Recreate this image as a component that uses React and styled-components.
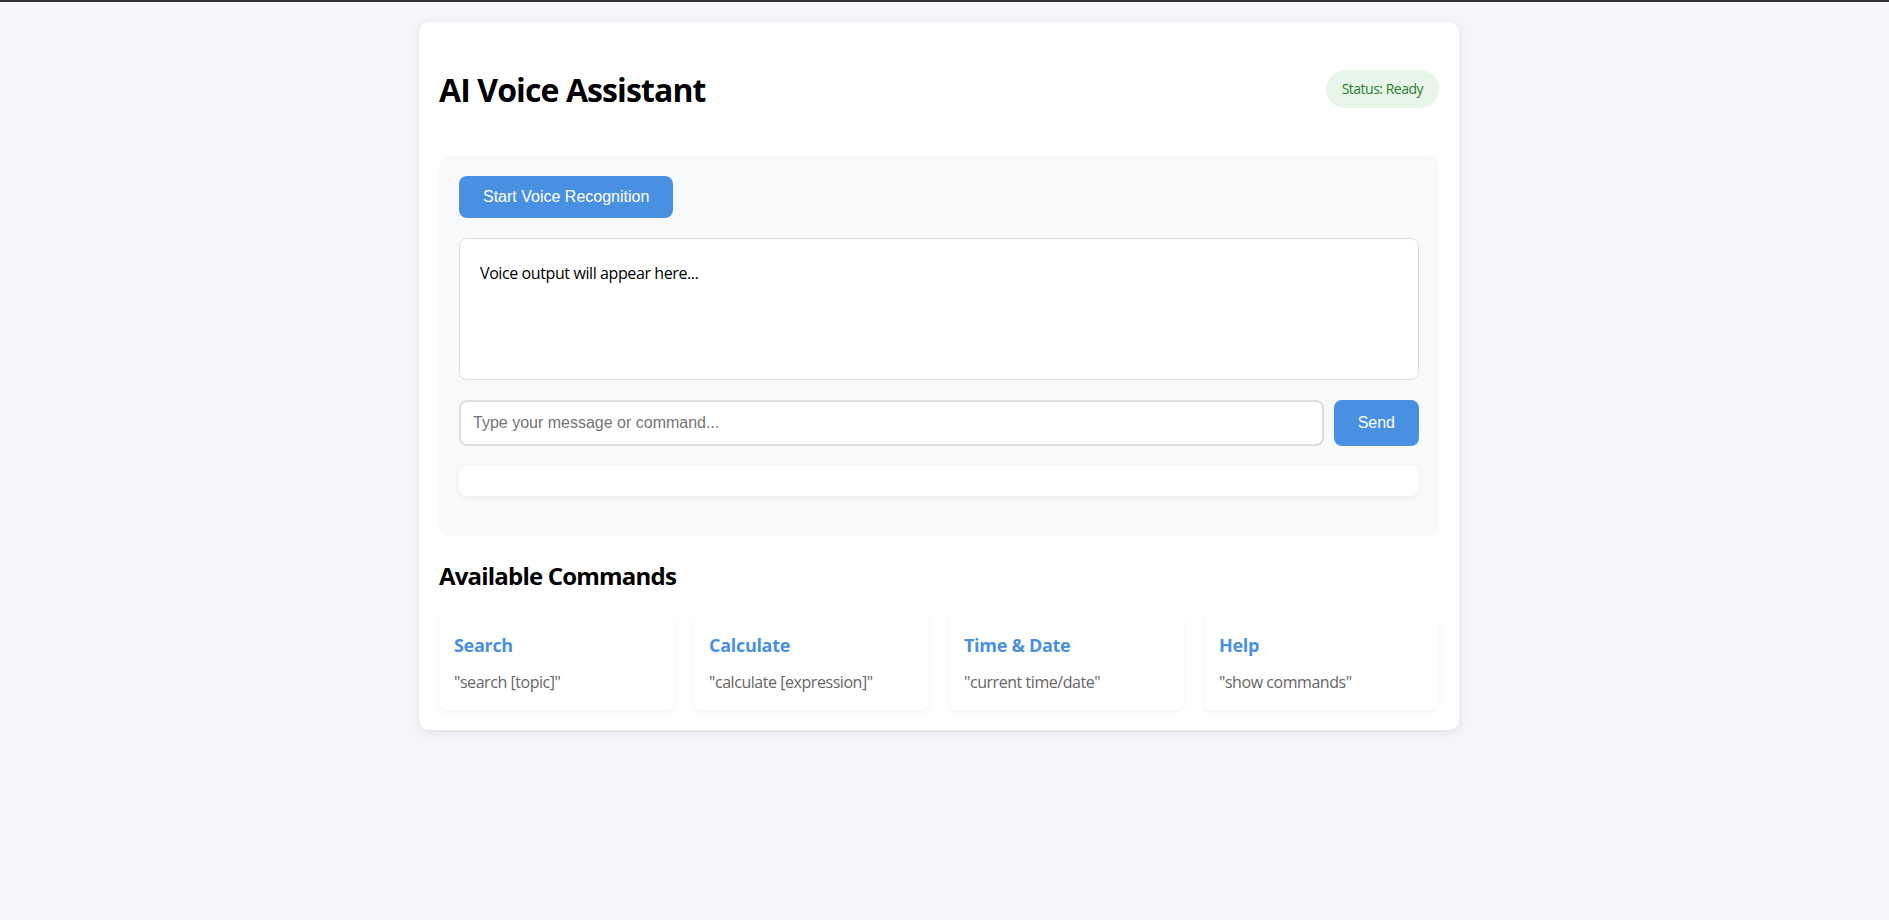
import React from "react";
import styled, { createGlobalStyle } from "styled-components";

const Global = createGlobalStyle`
  html, body { margin: 0; padding: 0; }
  body {
    background: #f5f6fa;
    font-family: "Open Sans", "Noto Sans", sans-serif;
    line-height: 1.6;
    color: #000;
  }
`;

const TopLine = styled.div`
  height: 2px;
  background: #333;
`;

const Page = styled.div`
  padding: 20px 11px 20px 0;
`;

const Card = styled.main`
  max-width: 1000px;
  margin: 0 auto;
  background: #fff;
  border-radius: 10px;
  padding: 20px;
  box-shadow: 0 2px 10px rgba(0, 0, 0, 0.1);
`;

const Header = styled.header`
  display: flex;
  justify-content: space-between;
  align-items: center;
  margin-bottom: 20px;
`;

const Title = styled.h1`
  font-size: 32px;
  font-weight: 700;
  margin: 22.4px 0 20.4px;
  line-height: 51.2px;
  letter-spacing: -0.9px;
`;

const Badge = styled.div`
  background: #e8f5e9;
  color: #2e7d32;
  font-size: 14px;
  line-height: 22.4px;
  padding: 8px 16px;
  border-radius: 20px;
  letter-spacing: -0.5px;
`;

const Panel = styled.section`
  background: #f8f9fa;
  border-radius: 10px;
  padding: 20px 20px 40px;
  display: flex;
  flex-direction: column;
  gap: 20px;
  margin-bottom: 20px;
`;

const Button = styled.button`
  background: #4a90e2;
  color: #fff;
  border: none;
  border-radius: 8px;
  padding: 12px 24px;
  font-family: "Liberation Sans", Arial, sans-serif;
  font-size: 16px;
  line-height: normal;
  cursor: pointer;
  align-self: ${(p) => (p.$start ? "flex-start" : "auto")};
  flex-shrink: 0;
`;

const Output = styled.div`
  background: #fff;
  border: 1px solid #ddd;
  border-radius: 8px;
  padding: 22px 20px 18px;
  min-height: 100px;
  font-size: 16px;
  line-height: 25.6px;
  letter-spacing: -0.4px;
`;

const InputRow = styled.div`
  display: flex;
  gap: 10px;
`;

const Input = styled.input`
  flex: 1;
  padding: 12px;
  border: 2px solid #ddd;
  border-radius: 8px;
  font-family: "Liberation Sans", Arial, sans-serif;
  font-size: 16px;
  line-height: normal;
  outline: none;
  &::placeholder { color: #757575; }
`;

const StatusArea = styled.div`
  background: #fff;
  border-radius: 8px;
  padding: 15px;
  box-shadow: 0 2px 5px rgba(0, 0, 0, 0.05);
`;

const SectionTitle = styled.h2`
  font-size: 24px;
  font-weight: 700;
  line-height: 38.4px;
  margin: 21px 0 18.9px;
  letter-spacing: -0.8px;
`;

const Grid = styled.div`
  display: grid;
  grid-template-columns: repeat(4, 1fr);
  gap: 20px;
`;

const CommandCard = styled.div`
  background: #fff;
  border-radius: 8px;
  padding: 17px 15px 14px;
  box-shadow: 0 2px 5px rgba(0, 0, 0, 0.05);
`;

const CommandName = styled.h3`
  margin: 0 0 10px;
  font-size: 18px;
  font-weight: 700;
  line-height: 28.8px;
  color: #4a90e2;
  letter-spacing: -0.3px;
`;

const CommandHint = styled.p`
  margin: 0;
  font-size: 16px;
  line-height: 25.6px;
  color: #666;
  letter-spacing: -0.45px;
`;

const commands = [
  { name: "Search", hint: '"search [topic]"' },
  { name: "Calculate", hint: '"calculate [expression]"' },
  { name: "Time & Date", hint: '"current time/date"' },
  { name: "Help", hint: '"show commands"' },
];

export default function App() {
  return (
    <>
      <Global />
      <TopLine />
      <Page>
        <Card>
          <Header>
            <Title>AI Voice Assistant</Title>
            <Badge>Status: Ready</Badge>
          </Header>
          <Panel>
            <Button $start>Start Voice Recognition</Button>
            <Output>Voice output will appear here...</Output>
            <InputRow>
              <Input placeholder="Type your message or command..." />
              <Button>Send</Button>
            </InputRow>
            <StatusArea />
          </Panel>
          <SectionTitle>Available Commands</SectionTitle>
          <Grid>
            {commands.map((c) => (
              <CommandCard key={c.name}>
                <CommandName>{c.name}</CommandName>
                <CommandHint>{c.hint}</CommandHint>
              </CommandCard>
            ))}
          </Grid>
        </Card>
      </Page>
    </>
  );
}
